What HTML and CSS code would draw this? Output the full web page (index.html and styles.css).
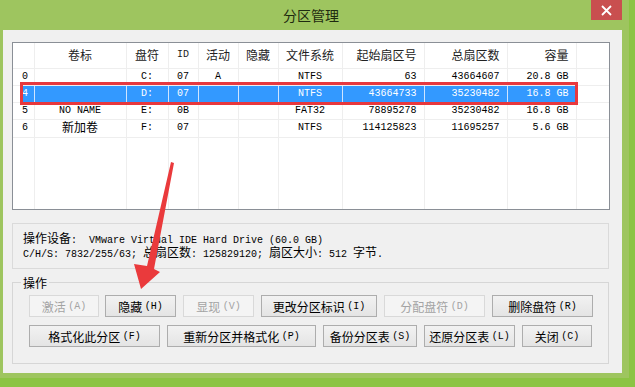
FILE: index.html
```html
<!DOCTYPE html>
<html lang="zh-CN">
<head>
    <meta charset="UTF-8">
    <title>分区管理</title>
    <link rel="stylesheet" href="styles.css">
</head>
<body>
    <div class="window">
        <div class="titlebar">
            <span class="title">分区管理</span>
            <button class="close" type="button">
                <svg width="11" height="11" viewBox="0 0 11 11"><path d="M1 1L10 10M10 1L1 10" stroke="#fff" stroke-width="1.8"/></svg>
            </button>
        </div>

        <div class="client">
            <div class="list">
                <table>
                    <colgroup>
                        <col class="c-num"><col class="c-label"><col class="c-drive"><col class="c-id">
                        <col class="c-act"><col class="c-hid"><col class="c-fs"><col class="c-start">
                        <col class="c-total"><col class="c-size"><col>
                    </colgroup>
                    <thead>
                        <tr>
                            <th></th>
                            <th class="z">卷标</th>
                            <th class="z">盘符</th>
                            <th>ID</th>
                            <th class="z">活动</th>
                            <th class="z">隐藏</th>
                            <th class="z">文件系统</th>
                            <th class="z r">起始扇区号</th>
                            <th class="z r">总扇区数</th>
                            <th class="z r">容量</th>
                            <th></th>
                        </tr>
                    </thead>
                    <tbody>
                        <tr>
                            <td class="l">0</td><td></td><td>C:</td><td>07</td><td>A</td><td></td>
                            <td>NTFS</td><td class="r">63</td><td class="r">43664607</td><td class="r">20.8 GB</td><td></td>
                        </tr>
                        <tr class="sel">
                            <td class="l">4</td><td></td><td>D:</td><td>07</td><td></td><td></td>
                            <td>NTFS</td><td class="r">43664733</td><td class="r">35230482</td><td class="r">16.8 GB</td><td class="blank"></td>
                        </tr>
                        <tr>
                            <td class="l">5</td><td>NO NAME</td><td>E:</td><td>0B</td><td></td><td></td>
                            <td>FAT32</td><td class="r">78895278</td><td class="r">35230482</td><td class="r">16.8 GB</td><td></td>
                        </tr>
                        <tr>
                            <td class="l">6</td><td><span class="z">新加卷</span></td><td>F:</td><td>07</td><td></td><td></td>
                            <td>NTFS</td><td class="r">114125823</td><td class="r">11695257</td><td class="r">5.6 GB</td><td></td>
                        </tr>
                        <tr class="rest">
                            <td></td><td></td><td></td><td></td><td></td><td></td>
                            <td></td><td></td><td></td><td></td><td></td>
                        </tr>
                    </tbody>
                </table>
                <div class="mark"></div>
            </div>

            <div class="info">
                <div class="line"><span class="z">操作设备</span>:  VMware Virtual IDE Hard Drive (60.0 GB)</div>
                <div class="line">C/H/S: 7832/255/63; <span class="z">总扇区数</span>: 125829120; <span class="z">扇区大小</span>: 512 <span class="z">字节</span>.</div>
            </div>

            <fieldset class="ops">
                <legend>操作</legend>
                <div class="btn-row">
                    <button class="btn w70 first" disabled>激活 <span class="key">(A)</span></button>
                    <button class="btn w71">隐藏 <span class="key">(H)</span></button>
                    <button class="btn w71" disabled>显现 <span class="key">(V)</span></button>
                    <button class="btn w116">更改分区标识 <span class="key">(I)</span></button>
                    <button class="btn w101" disabled>分配盘符 <span class="key">(D)</span></button>
                    <button class="btn w101">删除盘符 <span class="key">(R)</span></button>
                </div>
                <div class="btn-row">
                    <button class="btn w131">格式化此分区 <span class="key">(F)</span></button>
                    <button class="btn w149">重新分区并格式化 <span class="key">(P)</span></button>
                    <button class="btn w94">备份分区表 <span class="key">(S)</span></button>
                    <button class="btn w91">还原分区表 <span class="key">(L)</span></button>
                    <button class="btn w70">关闭 <span class="key">(C)</span></button>
                </div>
            </fieldset>
        </div>

        <svg class="arrow" width="635" height="387" viewBox="0 0 635 387">
            <polygon points="171,162 174,163 154,269 160,272 141,289 134,264 147,266" fill="#ea3a3c"/>
        </svg>
    </div>
</body>
</html>
```

FILE: styles.css
```css
body {
    margin: 0;
    background: #9ec55f;
}

.window {
    position: relative;
    width: 635px;
    height: 387px;
    background: #9ec55f;
    box-shadow: inset -6px -9px 0 #8cc443;
    font-family: "Noto Sans CJK SC", sans-serif;
    font-size: 12px;
    color: #000;
}

.titlebar {
    height: 30px;
    display: flex;
    align-items: center;
    justify-content: center;
    padding-right: 13px;
    box-sizing: border-box;
}

.title {
    font-size: 14px;
    color: #1e2a10;
}

.close {
    position: absolute;
    top: 0;
    right: 13px;
    width: 31px;
    height: 20px;
    padding: 0;
    border: 0;
    background: #c94f4f;
    display: flex;
    align-items: center;
    justify-content: center;
}

.client {
    margin-left: 3px;
    width: 619px;
    height: 343px;
    padding: 12px 0 0 9px;
    box-sizing: border-box;
    background: #f0f0f0;
}

/* ascii text is 6px wide, chinese is 12px */
.list, .info, .key {
    font-family: "Liberation Mono", "Noto Sans CJK SC", monospace;
    font-size: 10px;
}

.z {
    font-family: "Noto Sans CJK SC", sans-serif;
    font-size: 12px;
}

.list {
    position: relative;
    width: 598px;
    height: 168px;
    border: 1px solid #8a8f96;
    background: #fff;
    box-sizing: border-box;
}

table {
    width: 100%;
    border-collapse: collapse;
    table-layout: fixed;
}

.c-num { width: 21px; }
.c-label { width: 92px; }
.c-drive { width: 42px; }
.c-id { width: 30px; }
.c-act { width: 40px; }
.c-hid { width: 40px; }
.c-fs { width: 64px; }
.c-start { width: 82px; }
.c-total { width: 83px; }
.c-size { width: 69px; }

th, td {
    padding: 0;
    border-right: 1px solid #eeeeee;
    border-bottom: 1px solid #eeeeee;
    text-align: center;
    white-space: nowrap;
    overflow: hidden;
    font-weight: normal;
    line-height: 14px;
}

th {
    color: #222;
}

th:last-child, td:last-child {
    border-right: 0;
}

thead tr { height: 25px; }
tbody tr { height: 17px; }
tr.rest { height: 72px; }
tr.rest td { border-bottom: 0; }

.l {
    text-align: left;
    padding-left: 9px;
}

.r {
    text-align: right;
    padding-right: 7px;
}

.sel td {
    background: #3399ff;
    color: #fff;
    border-right-color: #cfe5ff;
}

.sel td.l {
    background: linear-gradient(to right, #fff 7px, #3399ff 7px);
}

.sel td.blank {
    background: #fff;
}

.mark {
    position: absolute;
    left: 7px;
    top: 39px;
    width: 558px;
    height: 23px;
    border: 3px solid #e8383d;
    box-sizing: border-box;
}

.info {
    margin-top: 13px;
    width: 597px;
    height: 46px;
    padding: 7px 0 0 10px;
    border: 1px solid #dadada;
    box-sizing: border-box;
}

.info .line {
    height: 14px;
    line-height: 14px;
    white-space: pre;
}

.ops {
    margin: 5px 0 0;
    width: 597px;
    height: 90px;
    padding: 4px 0 0 16px;
    border: 1px solid #d6d6d6;
    box-sizing: border-box;
}

.ops legend {
    margin-left: -8px;
    padding: 0 2px;
    font-size: 12px;
    line-height: 17px;
}

.btn-row {
    display: flex;
    gap: 7px;
    margin-bottom: 8px;
}

.btn.first {
    margin-right: -1px;
}

.btn {
    height: 22px;
    padding: 0;
    border: 1px solid #adadad;
    background: linear-gradient(#f2f2f2, #e4e4e4);
    font-family: "Noto Sans CJK SC", sans-serif;
    font-size: 12px;
    color: #000;
    display: flex;
    align-items: center;
    justify-content: center;
    white-space: pre;
}

.btn:disabled {
    border-color: #d9d9d9;
    background: #f4f4f4;
    color: #a3a3a3;
}

.w70 { width: 70px; }
.w71 { width: 71px; }
.w91 { width: 91px; }
.w94 { width: 94px; }
.w101 { width: 101px; }
.w116 { width: 116px; }
.w131 { width: 131px; }
.w149 { width: 149px; }

.arrow {
    position: absolute;
    top: 0;
    left: 0;
    pointer-events: none;
}
```
